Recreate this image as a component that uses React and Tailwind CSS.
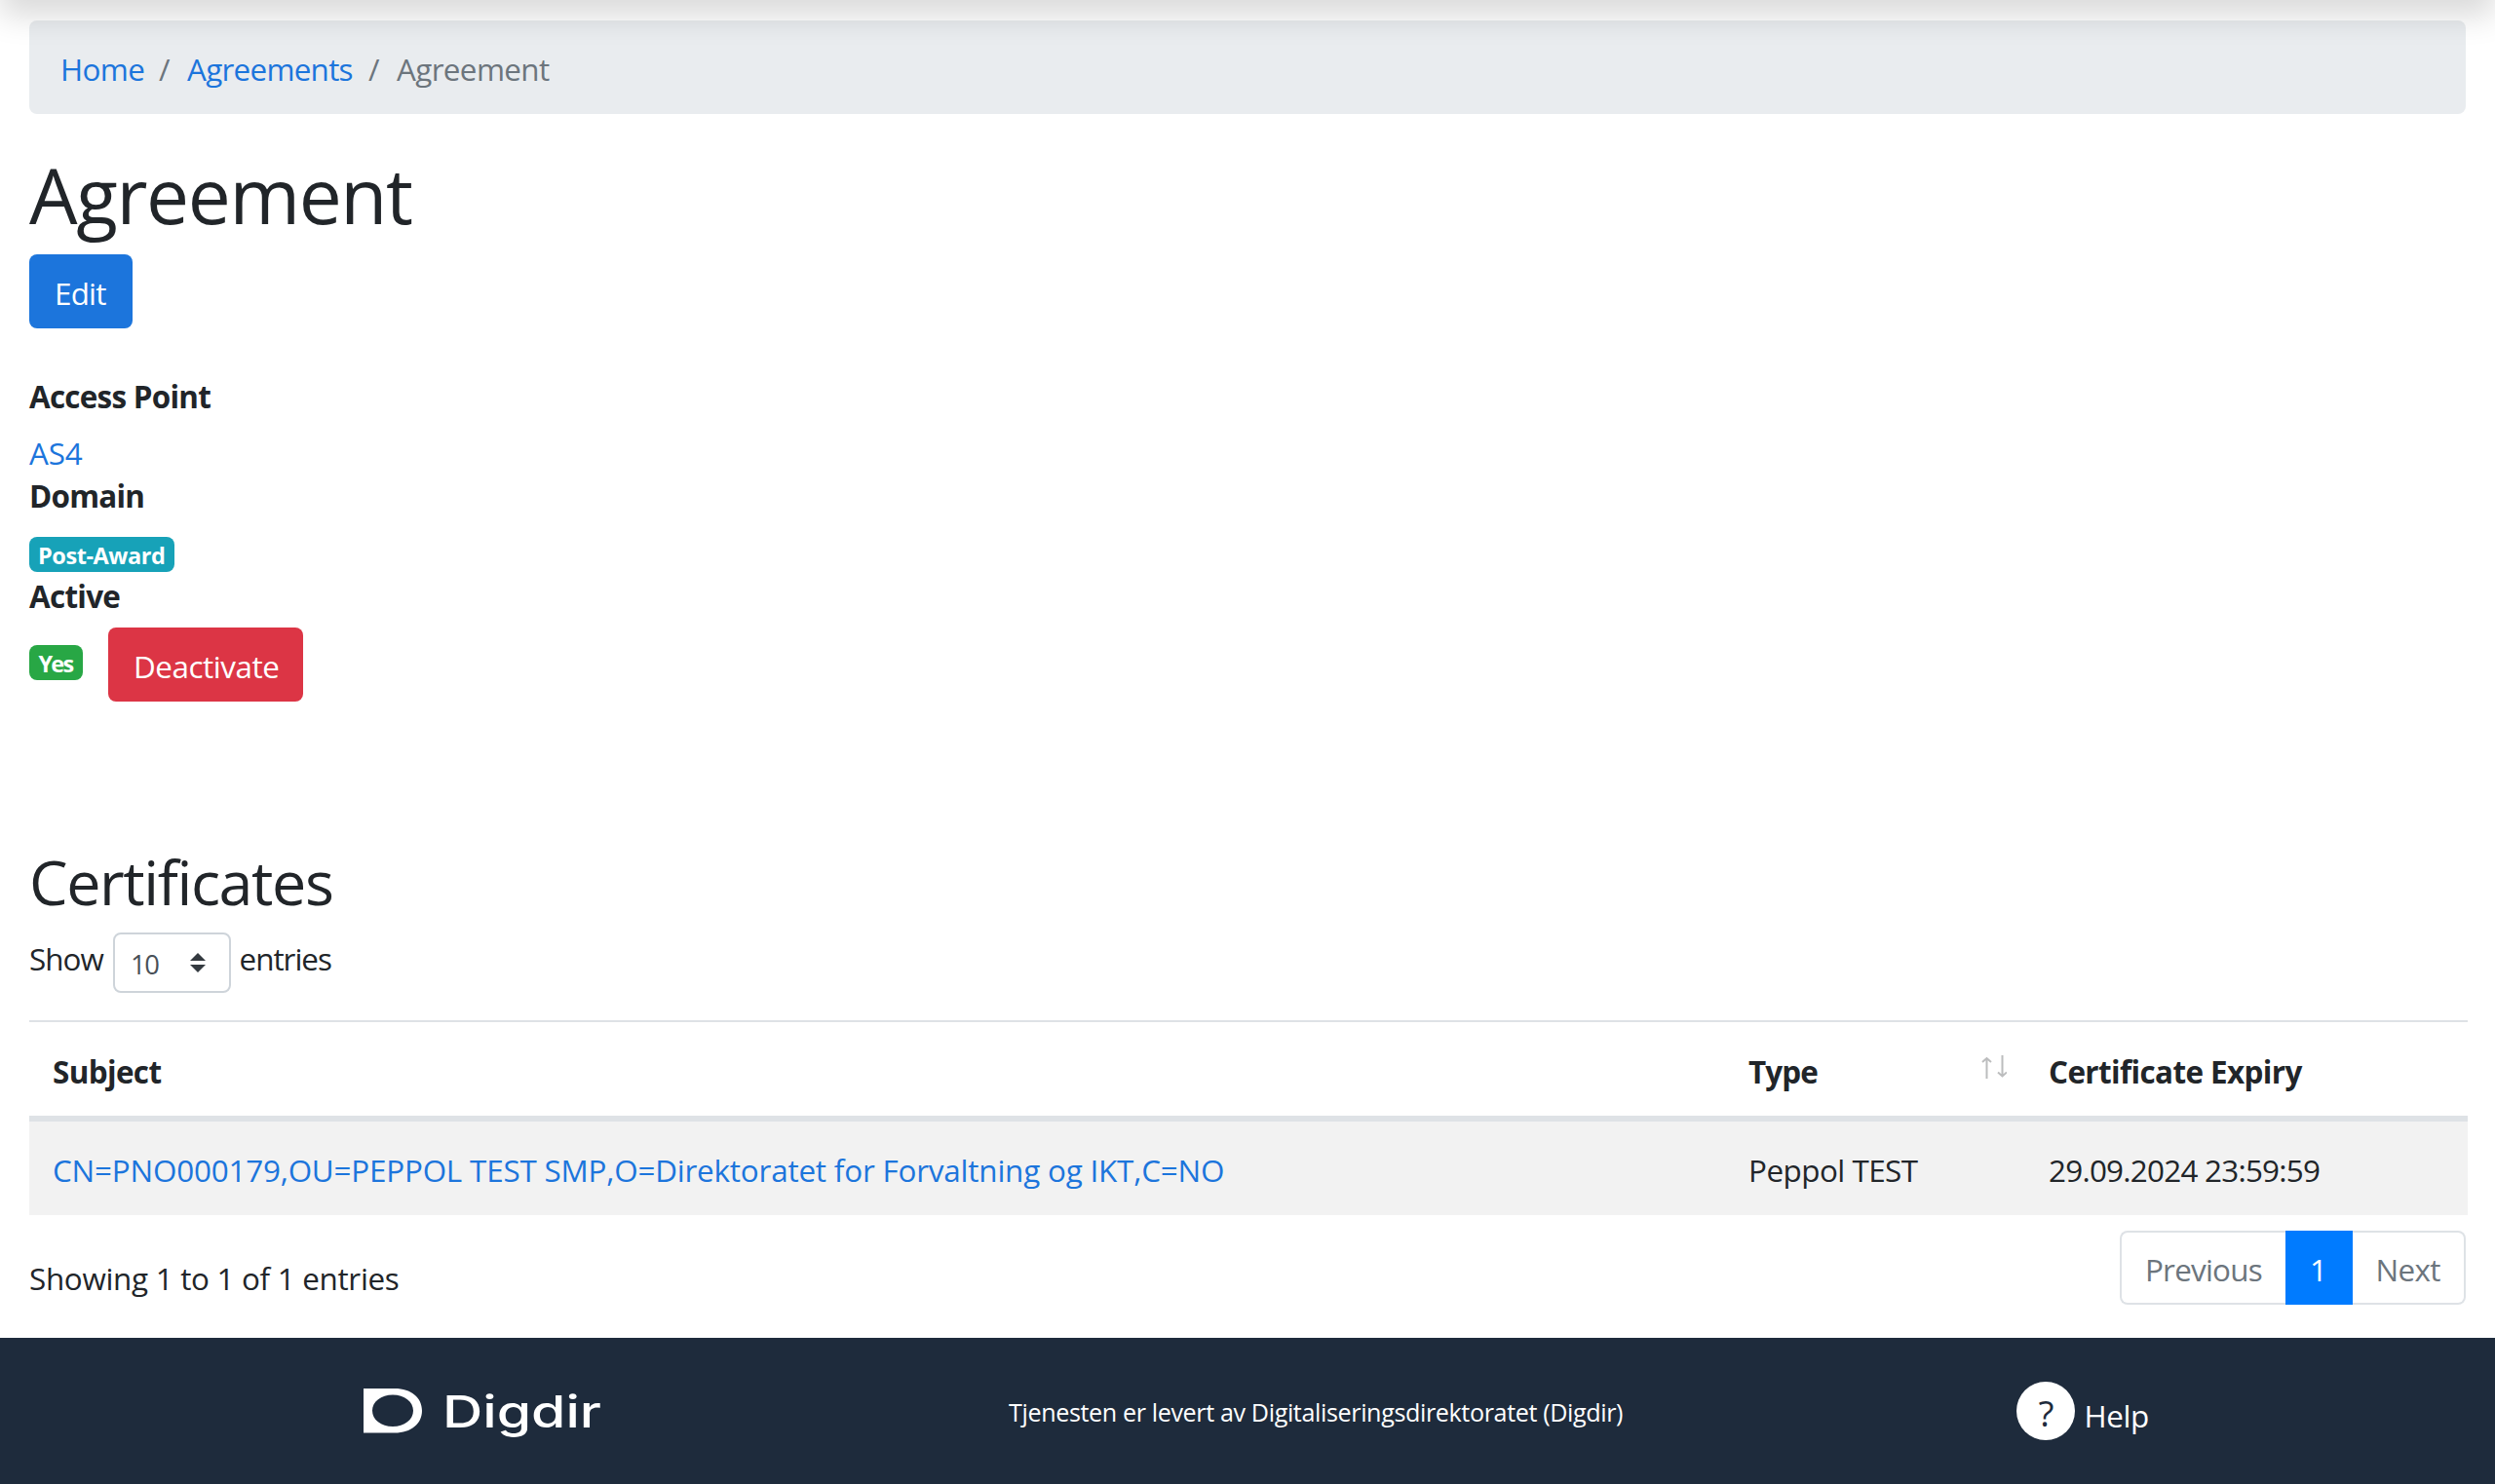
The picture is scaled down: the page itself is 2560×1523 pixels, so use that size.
import React from 'react';

const link = 'text-[#1c75dc]';

function Btn({ className, children }) {
  return (
    <button className={`flex h-[76px] items-start rounded-lg pt-4 text-left leading-[48px] text-white ${className}`}>
      {children}
    </button>
  );
}

function Logo() {
  return (
    <svg width="250" height="60" viewBox="0 0 250 60" className="block" fill="#fff">
      <path
        fillRule="evenodd"
        d="M0 7H32C49 7 60 16.500 60 29.750C60 43 49 52.500 32 52.500H0ZM30 13.500C18 13.500 9 20.500 9 29.750C9 39 18 46 30 46C42 46 51 39 51 29.750C51 20.500 42 13.500 30 13.500Z"
      />
      <text
        x="81"
        y="46.500"
        fontFamily="Inter, sans-serif"
        fontSize="45"
        fontWeight="500"
        textLength="163"
        lengthAdjust="spacingAndGlyphs"
      >
        Digdir
      </text>
    </svg>
  );
}

export default function App() {
  return (
    <div className="relative h-[1523px] w-[2560px] overflow-hidden whitespace-nowrap bg-white font-['Open_Sans',sans-serif] text-[31.4px] leading-[48px] text-[#212529]">
      <div className="absolute -top-24 left-0 h-24 w-full shadow-[0_16px_32px_rgba(0,0,0,0.15)]" />

      <main className="flex h-[1373px] flex-col pl-[30px] pr-[28px] pt-[21px]">
        <nav className="mr-[2px] flex h-[96px] shrink-0 rounded-lg bg-[#e9ecef] pl-[32px] pt-[26px] text-[#6c757d]">
          <a className={`w-[101px] tracking-[-0.6px] ${link}`}>Home</a>
          <span className="w-[29px]">/</span>
          <a className={`w-[186px] tracking-[-0.72px] ${link}`}>Agreements</a>
          <span className="w-[29px]">/</span>
          <span className="tracking-[-0.62px]">Agreement</span>
        </nav>

        <h1 className="mt-[35px] text-[78.4px] leading-[96px] tracking-[-1.35px]">Agreement</h1>
        <Btn className="mt-[13px] w-[106px] shrink-0 bg-[#1c75dc] pl-[26px] tracking-[-0.8px]">Edit</Btn>

        <dl className="mt-[45px]">
          <dt className="pt-px font-bold leading-[47px] tracking-[-0.73px]">Access Point</dt>
          <dd className={`mt-[11px] h-[43px] tracking-[-0.2px] ${link}`}>AS4</dd>
          <dt className="pt-px font-bold leading-[47px] tracking-[-0.75px]">Domain</dt>
          <dd className="mt-[19px] h-9 w-[149px] rounded-lg bg-[#17a2b8] pl-[9px] pt-px text-[23.5px] leading-9 font-bold tracking-[-0.45px] text-white">
            Post-Award
          </dd>
          <dt className="pt-px font-bold leading-[47px] tracking-[-0.7px]">Active</dt>
          <dd className="mt-[9px] flex items-start gap-[26px]">
            <span className="mt-[18px] h-9 w-[55px] rounded-lg bg-[#28a745] pl-[9.5px] pt-px text-[23.5px] leading-9 font-bold tracking-[-1.8px] text-white">
              Yes
            </span>
            <Btn className="w-[200px] bg-[#dc3545] pl-[26px] tracking-[-0.45px]">Deactivate</Btn>
          </dd>
        </dl>

        <h2 className="mt-[147px] text-[62.8px] leading-[76px] tracking-[-1.4px]">Certificates</h2>
        <div className="mt-[14px] flex h-[62px] shrink-0">
          <span className="w-[86px] pt-[3px] tracking-[-0.93px]">Show</span>
          <span className="flex h-[62px] w-[121px] rounded-lg border-2 border-[#ced4da] pl-[16px] pt-[7px] text-[27.4px] tracking-[-1.4px] text-[#495057]">
            <span className="w-[61px]">10</span>
            <svg width="16" height="20" viewBox="0 0 16 20" className="mt-[12px]" fill="#343a40">
              <path d="M0 8L8 0L16 8ZM0 12H16L8 20Z" />
            </svg>
          </span>
          <span className="ml-[8.5px] pt-[3px] tracking-[-1px]">entries</span>
        </div>

        <div className="mt-7">
          <div className="grid h-[104px] grid-cols-[1739px_308px_455px] border-t-2 border-b-6 border-[#dee2e6] pt-[27px] font-bold">
            <span className="pl-6 tracking-[-0.61px]">Subject</span>
            <span className="flex justify-between pl-[25px] pr-[18px] tracking-[-0.9px]">
              Type
              <svg width="26" height="24" viewBox="0 0 26 24" className="mt-[7px]" fill="none" stroke="#bcbdbe" strokeWidth="2">
                <path d="M5.500 24V3M1 7L5.500 3L10 7M21.500 0V21.500M17 17.500L21.500 21.500L26 17.500" />
              </svg>
            </span>
            <span className="pl-[25px] tracking-[-0.6px]">Certificate Expiry</span>
          </div>
          <div className="grid h-[96px] grid-cols-[1739px_308px_455px] bg-[#f2f2f2] pt-[26px]">
            <a className={`pl-6 tracking-[-0.19px] ${link}`}>
              CN=PNO000179,OU=PEPPOL TEST SMP,O=Direktoratet for Forvaltning og IKT,C=NO
            </a>
            <span className="pl-[25px] tracking-[-0.5px]">Peppol TEST</span>
            <span className="pl-[25px] tracking-[-0.75px]">29.09.2024 23:59:59</span>
          </div>
        </div>

        <div className="mr-[2px] flex items-start justify-between">
          <span className="pt-[41px] tracking-[-0.3px]">Showing 1 to 1 of 1 entries</span>
          <div className="mt-4 flex h-[76px] text-[#6c757d]">
            <span className="w-[170px] rounded-l-lg border-2 border-r-0 border-[#dee2e6] pl-[24px] pt-[14px] tracking-[-0.77px]">
              Previous
            </span>
            <span className="w-[69px] bg-[#007bff] pl-[25px] pt-4 text-white">1</span>
            <span className="w-[116px] rounded-r-lg border-2 border-l-0 border-[#dee2e6] pl-[23.5px] pt-[14px] tracking-[-0.61px]">
              Next
            </span>
          </div>
        </div>
      </main>

      <footer className="flex h-[150px] items-start bg-[#1e2b3c] pl-[373px] text-white">
        <div className="w-[662px] pt-[45px]">
          <Logo />
        </div>
        <span className="w-[1034px] pt-[52px] text-[25.1px] tracking-[-0.367px]">
          Tjenesten er levert av Digitaliseringsdirektoratet (Digdir)
        </span>
        <span className="mt-[45px] flex h-[60px] w-[60px] items-center justify-center rounded-full bg-white pl-px pt-[4px] text-[37px] text-[#1e2b3c]">
          ?
        </span>
        <span className="ml-[9.5px] pt-[56px] tracking-[-0.38px]">Help</span>
      </footer>
    </div>
  );
}
